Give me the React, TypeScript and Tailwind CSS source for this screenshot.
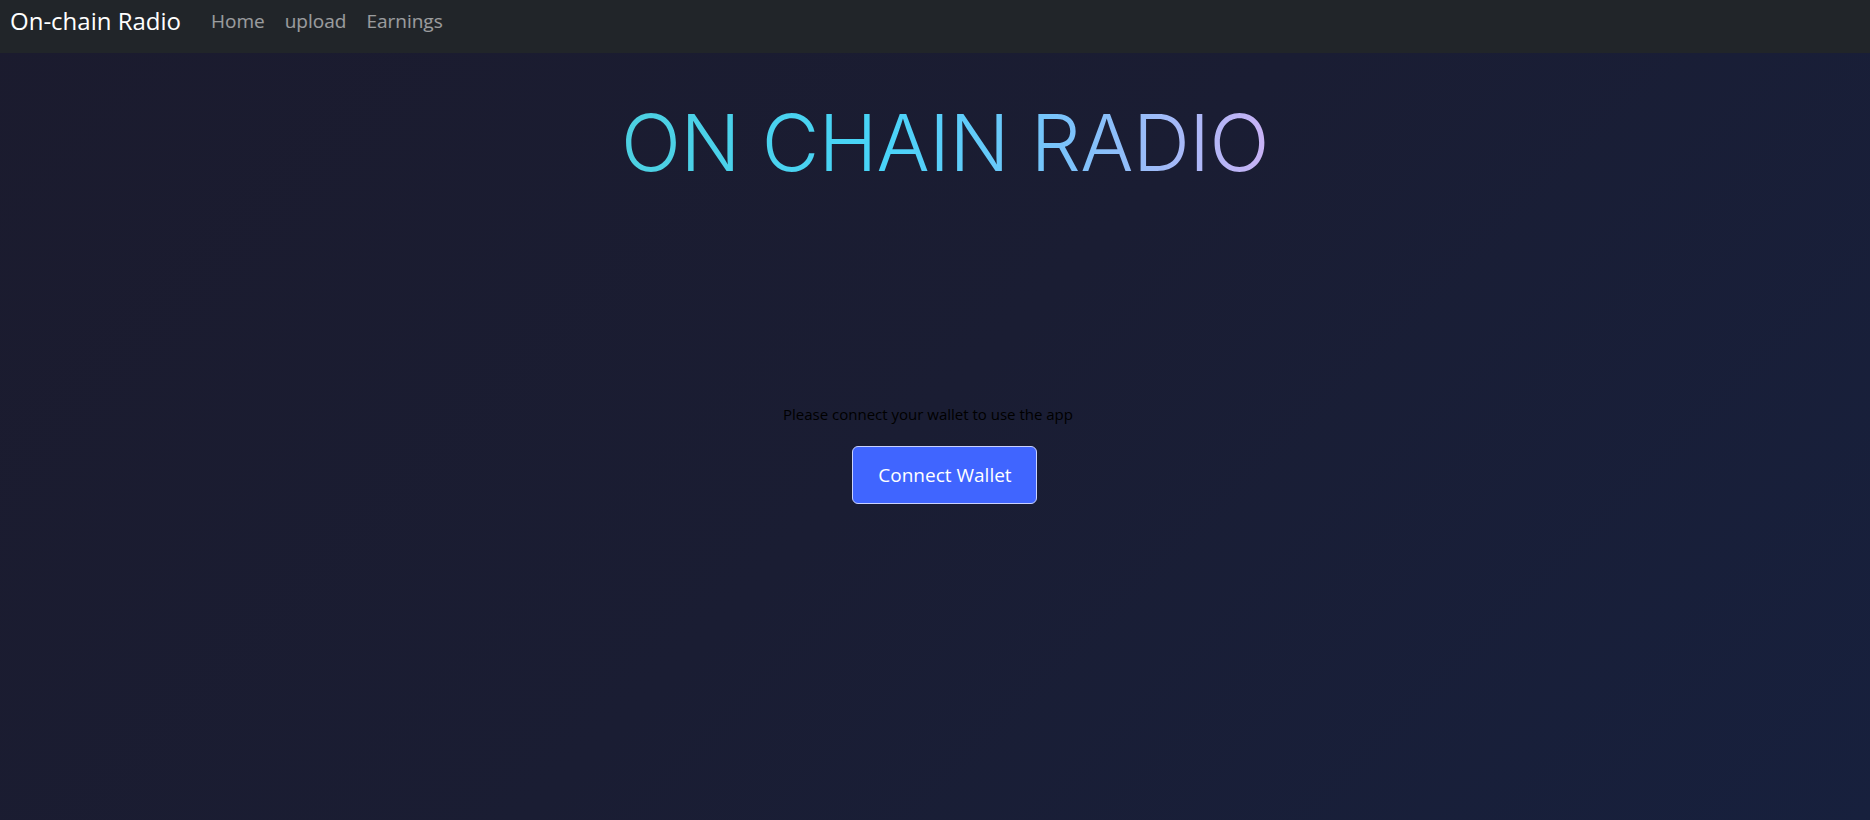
export default function App() {
  return (
    <div className="flex min-h-screen flex-col bg-[linear-gradient(135deg,#1b1b2e_0%,#1a1d33_50%,#17203d_100%)]">
      {/* Navbar */}
      <header className="h-[53px] w-full bg-[#212529]">
        <nav className="flex items-center px-[10px] pt-[5px] font-['Open_Sans',sans-serif]">
          <a href="#" className="mr-[30px] text-[24px] leading-[32px] text-white">
            On-chain Radio
          </a>
          <div className="flex gap-x-[20px] text-[19px] text-white/55">
            <a href="#">Home</a>
            <a href="#">upload</a>
            <a href="#">Earnings</a>
          </div>
        </nav>
      </header>

      <main className="flex flex-1 flex-col items-center pl-[20px]">
        <h1 className="mt-[50px] bg-[linear-gradient(90deg,#4dd0e1_0%,#48d4f8_40%,#7ec2fb_70%,#c9b2f5_100%)] bg-clip-text font-['Inter',sans-serif] text-[79px] font-light leading-none tracking-[-0.5px] text-transparent">
          ON CHAIN RADIO
        </h1>

        <div className="mt-[220px] flex flex-col items-center font-['Open_Sans',sans-serif]">
          <p className="mr-[34px] text-[15px] leading-[24px] text-black">Please connect your wallet to use the app</p>
          <button className="mt-[20px] h-[58px] w-[185px] rounded-[6px] border border-[#c9d2ff] bg-[#4065ff] text-[19px] text-white">
            Connect Wallet
          </button>
        </div>
      </main>
    </div>
  );
}
